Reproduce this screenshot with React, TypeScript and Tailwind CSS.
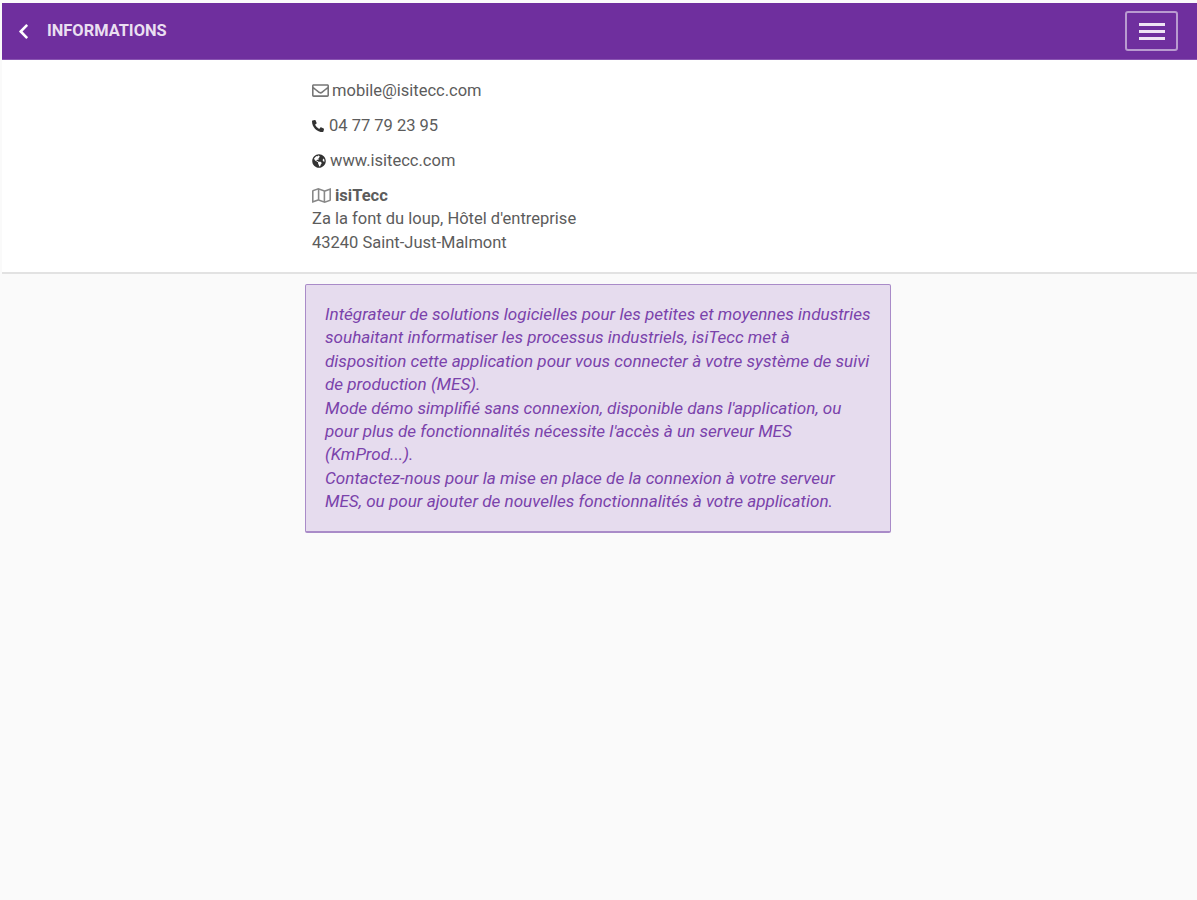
import { FaChevronLeft, FaGlobeAmericas, FaPhoneAlt, FaRegEnvelope, FaRegMap } from 'react-icons/fa'

export default function App() {
  return (
    <div className="h-[900px] bg-[#fafafa] pt-[3px] pl-[2px] font-['Roboto',sans-serif] text-[#5c5c5c] text-[16.5px] leading-[23.4px] overflow-hidden">
      <div className="header flex items-center justify-between h-[57px] bg-[#6f2f9e] pl-[13px] pr-[19px] border-b border-[#8a55b2]">
        <div className="flex items-center">
          <FaChevronLeft className="text-white" size={17} />
          <h1 className="ml-[15px] text-[#eadff1] text-[16.4px] font-bold uppercase">Informations</h1>
        </div>
        <button className="flex flex-col items-center justify-center gap-[4px] w-[53px] h-[40px] border-2 border-[#b99bd0] rounded-[3px]">
          <span className="block w-[26px] h-[3px] bg-[#eee4f4]"></span>
          <span className="block w-[26px] h-[3px] bg-[#eee4f4]"></span>
          <span className="block w-[26px] h-[3px] bg-[#eee4f4]"></span>
        </button>
      </div>

      <div className="contact bg-white h-[214px] pl-[310px] pt-[19px] border-b-2 border-[#e2e2e2]">
        <p className="flex items-center gap-[3px]"><FaRegEnvelope className="text-[#777777]" size={17} />mobile@isitecc.com</p>
        <p className="flex items-center gap-[5px] mt-[11.6px]"><FaPhoneAlt className="text-[#333333]" size={12} />04 77 79 23 95</p>
        <p className="flex items-center gap-[4px] mt-[11.6px]"><FaGlobeAmericas className="text-[#333333]" size={14} />www.isitecc.com</p>
        <div className="mt-[11.6px]">
          <p className="flex items-center gap-[4px]"><FaRegMap className="text-[#888888]" size={19} /><b>isiTecc</b></p>
          <p>Za la font du loup, Hôtel d'entreprise</p>
          <p>43240 Saint-Just-Malmont</p>
        </div>
      </div>

      <div className="info w-[586px] h-[249px] ml-[303px] mt-[10px] px-[19px] pt-[18px] bg-[#e6dcee] border border-[#a98bc8] border-b-2 rounded-[2px] italic text-[17.08px] text-[#7a42ab]">
        Intégrateur de solutions logicielles pour les petites et moyennes industries souhaitant informatiser les processus industriels, isiTecc met à disposition cette application pour vous connecter à votre système de suivi de production (MES).
        <br />
        Mode démo simplifié sans connexion, disponible dans l'application, ou pour plus de fonctionnalités nécessite l'accès à un serveur MES (KmProd...).
        <br />
        Contactez-nous pour la mise en place de la connexion à votre serveur MES, ou pour ajouter de nouvelles fonctionnalités à votre application.
      </div>
    </div>
  )
}
